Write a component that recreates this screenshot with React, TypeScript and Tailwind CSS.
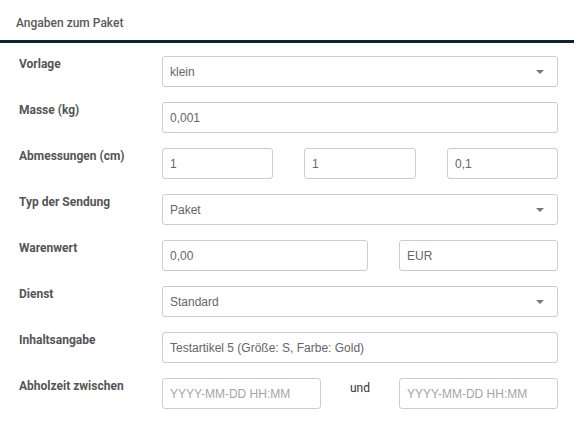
import React from 'react';

const labelCls = 'w-[143px] shrink-0 pt-[1px] text-[12px] font-bold leading-[14px] text-[#555]';
const boxCls =
  'h-[31px] rounded-[3px] border border-[#ccc] bg-white px-[7px] flex items-center text-[12px] text-[#666]';

const Caret = () => (
  <svg width="8" height="4" viewBox="0 0 8 4" className="ml-auto mr-[6px]">
    <path d="M0 0h8L4 4z" fill="#777" />
  </svg>
);

const Box = ({ value, placeholder, select, className = '' }: { value?: string; placeholder?: string; select?: boolean; className?: string }) => (
  <div className={`${boxCls} ${className}`} style={{ fontFamily: '"Liberation Sans", Arial, sans-serif' }}>
    {value ? <span>{value}</span> : <span className="text-[#a5a5a5]">{placeholder}</span>}
    {select && <Caret />}
  </div>
);

const Row = ({ label, children }: { label: string; children: React.ReactNode }) => (
  <div className="flex items-start pl-[19px]">
    <div className={labelCls}>{label}</div>
    <div className="w-[396px] flex">{children}</div>
  </div>
);

export default function App() {
  return (
    <div className="w-[578px] h-[426px] bg-white" style={{ fontFamily: 'Roboto, "Liberation Sans", sans-serif' }}>
      <div className="pl-[16px] pt-[14px] h-[40px] text-[12px] font-medium text-[#5a5a5a]">Angaben zum Paket</div>
      <div className="w-[574px] h-[3px] bg-[#0c2534]" />
      <div className="flex flex-col gap-[15px] pt-[13px]">
        <Row label="Vorlage">
          <Box value="klein" select className="w-full" />
        </Row>
        <Row label="Masse (kg)">
          <Box value="0,001" className="w-full" />
        </Row>
        <Row label="Abmessungen (cm)">
          <div className="flex gap-[31px] w-full">
            <Box value="1" className="w-[111px]" />
            <Box value="1" className="w-[112px]" />
            <Box value="0,1" className="w-[111px]" />
          </div>
        </Row>
        <Row label="Typ der Sendung">
          <Box value="Paket" select className="w-full" />
        </Row>
        <Row label="Warenwert">
          <div className="flex gap-[31px] w-full">
            <Box value="0,00" className="w-[206px]" />
            <Box value="EUR" className="w-[159px]" />
          </div>
        </Row>
        <Row label="Dienst">
          <Box value="Standard" select className="w-full" />
        </Row>
        <Row label="Inhaltsangabe">
          <Box value="Testartikel 5 (Größe: S, Farbe: Gold)" className="w-full" />
        </Row>
        <Row label="Abholzeit zwischen">
          <div className="flex w-full">
            <Box placeholder="YYYY-MM-DD HH:MM" className="w-[159px]" />
            <div className="flex-1 text-center text-[12px] text-[#333] pt-[1px]">und</div>
            <Box placeholder="YYYY-MM-DD HH:MM" className="w-[159px]" />
          </div>
        </Row>
      </div>
    </div>
  );
}
